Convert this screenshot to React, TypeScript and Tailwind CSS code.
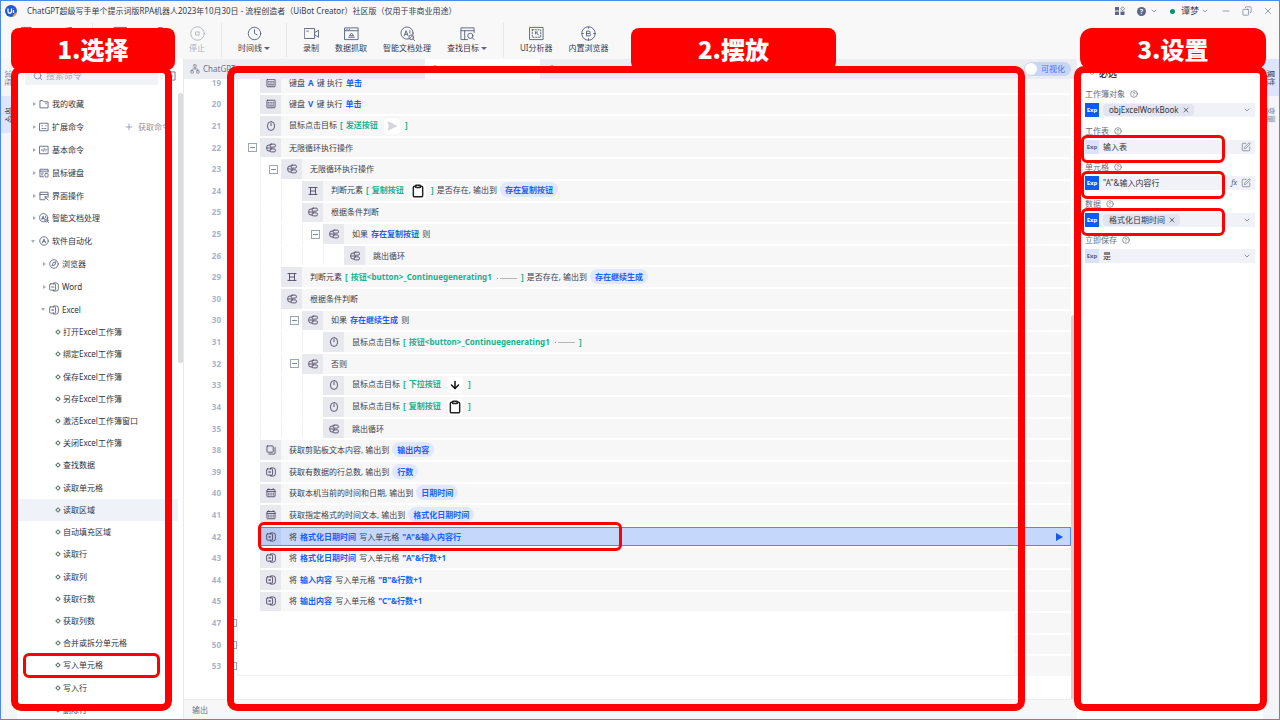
import { useState } from 'react';
import type { ReactNode } from 'react';
import clsx from 'clsx';
import {
  ArrowDown,
  ChevronDown,
  CircleHelp,
  Clipboard,
  Clock,
  Copy as Restore,
  Minus,
  Network,
  Plus,
  Search,
  SendHorizontal,
  SquarePen,
  X,
} from 'lucide-react';

/* ---------- icons ---------- */

interface GlyphProps {
  className?: string;
  children: ReactNode;
}

function Glyph({ className, children }: GlyphProps) {
  return (
    <svg
      viewBox="0 0 16 16"
      className={clsx('shrink-0', className)}
      fill="none"
      stroke="currentColor"
      strokeWidth="1.4"
      strokeLinecap="round"
      strokeLinejoin="round"
      aria-hidden="true"
    >
      {children}
    </svg>
  );
}

const glyphs = {
  keyboard: (
    <>
      <rect x="1.5" y="2" width="13" height="12" rx="1" />
      <path d="M4 5.5h1M7.5 5.5h1M11 5.5h1M4 8h1M7.5 8h1M11 8h1M4 11h8" />
    </>
  ),
  mouse: (
    <>
      <rect x="2.5" y="1" width="11" height="14" rx="5.5" />
      <path d="M8 4v3.5" />
    </>
  ),
  branch: (
    <>
      <rect x="6.5" y="1.8" width="8.5" height="4.8" rx="1.8" />
      <rect x="6.5" y="9.4" width="8.500" height="4.8" rx="1.8" />
      <path d="M6.500 3.200H5A3.500 3.500 0 0 0 1.200 6.700v2.600A3.500 3.500 0 0 0 5 12.800h1.500M1.500 8h7" />
    </>
  ),
  frame: <path d="M4 2.500v11M12 2.500v11M1.500 2.500h13M1.500 13.500h13M4 8h8" />,
  copy: (
    <>
      <rect x="1.5" y="1.5" width="10" height="10" rx="1" />
      <path d="M14.5 4v9a1.5 1.5 0 0 1-1.5 1.5H4.5" />
    </>
  ),
  excel: (
    <>
      <rect x="1" y="3" width="9.500" height="10" rx="1.500" />
      <path d="M7 3V1.500h4.500a3.500 3.500 0 0 1 3.500 3.500v6a3.500 3.500 0 0 1-3.500 3.500H7V13M4.500 6.700l2.600 2.600M7.100 6.700L4.500 9.300" />
    </>
  ),
  word: (
    <>
      <rect x="1" y="3" width="9.500" height="10" rx="1.500" />
      <path d="M7 3V1.500h4.500a3.500 3.500 0 0 1 3.500 3.500v6a3.500 3.500 0 0 1-3.500 3.500H7V13M4 8h4" />
    </>
  ),
  calendar: (
    <>
      <rect x="1.5" y="2.5" width="13" height="11.5" rx="1" />
      <path d="M1.5 5.5h13M4.5 8v3.5M8 8v3.5M11.5 8v3.5M4.5 1v1.5M11.5 1v1.5" />
    </>
  ),
  folder: <path d="M1.5 13.5v-11H6l2 2h6.5v9zM11 7.5h1" />,
  extend: (
    <>
      <rect x="1.5" y="2" width="13" height="12" />
      <path d="M5 5.5v1M11 5.5v1M5 10.5h2M9 10.5h2" />
    </>
  ),
  basic: (
    <>
      <rect x="1.5" y="2" width="13" height="12" />
      <path d="M5.5 6.5L4 8l1.5 1.5M10.5 6.5L12 8l-1.5 1.5M8.5 6l-1 4" />
    </>
  ),
  device: (
    <>
      <path d="M7 14H1.5V2h13v4.5M1.5 5h13M4 8h3M4 11h2" />
      <rect x="9.5" y="8.5" width="5" height="6" rx="1.5" />
    </>
  ),
  screen: <path d="M9 14H1.5V2h13v8M1.5 5.5h13M10 9.5l4.5 5M10 9.5v3M10 9.5h3" />,
  ai: (
    <>
      <circle cx="7.5" cy="7.5" r="6.5" />
      <path d="M4.5 10.5l2-5.5 2 5.5M5.2 8.800h2.600M10.500 5v2.500" />
      <circle cx="12" cy="12" r="2.5" />
      <path d="M14 14l1.5 1.5" />
    </>
  ),
  soft: (
    <>
      <circle cx="8" cy="8" r="6.8" />
      <path d="M5.5 11L8 4.8 10.5 11M6.5 9h3" />
    </>
  ),
  compass: (
    <>
      <circle cx="8" cy="8" r="6.8" />
      <path d="M11 5L9.5 9.5 5 11l1.5-4.5z" />
    </>
  ),
};

const toolGlyphs = {
  save: <path d="M2 1.5h10l2 2v11H2zM5 1.5v4h6v-4M5 14.5V9h6v5.5" />,
  run: <path d="M1.5 3.5L14.5 1.5v13H1.5z" />,
  record: <path d="M1.5 1.5h13v11h-13zM5 15h6" />,
  pause: (
    <>
      <circle cx="8" cy="8" r="6.5" />
      <path d="M6.5 5.5v5M9.5 5.5v5" />
    </>
  ),
  stop: (
    <>
      <circle cx="8" cy="8" r="7.2" />
      <rect x="6.3" y="6.3" width="3.4" height="3.4" />
    </>
  ),
  camera: (
    <>
      <rect x="0.7" y="2.7" width="10.6" height="10.6" />
      <path d="M11.5 7l4-2.5v7.5l-4-2.5M3 5.5h1.5" />
    </>
  ),
  grab: (
    <>
      <rect x="1" y="2" width="14" height="12.5" />
      <path d="M1 5h14M3 3.5h.5M5.5 3.5h.5M5 12h6M6 10l2-2.5 2 2.5z" />
    </>
  ),
  find: (
    <>
      <path d="M8 14.5H1V2h14v5M1 5h14M5 5v9.5" />
      <circle cx="11" cy="10.5" r="2.8" />
      <path d="M13 12.5l2.2 2.2" />
    </>
  ),
  inspect: (
    <>
      <rect x="1" y="1.5" width="14" height="13" />
      <rect x="3.5" y="4" width="9" height="8" strokeDasharray="1.4 1.6" />
      <path d="M7 6.5l3 3M7 6.5v2M7 6.5h2" />
    </>
  ),
  browser: (
    <>
      <circle cx="8" cy="8" r="7.2" />
      <path d="M6.3 5.5h2.2a1.2 1.2 0 0 1 0 2.5H6.3zM6.3 8h2.7a1.2 1.2 0 0 1 0 2.5H6.3zM8 1v1.5M8 13.5V15M1 8h1.5M13.5 8H15" />
    </>
  ),
};

type GlyphName = keyof typeof glyphs;

/* ---------- title bar ---------- */

function TitleBar() {
  return (
    <header className="flex h-5 shrink-0 items-center pl-1 pr-1.5">
      <svg viewBox="0 0 24 24" className="size-3 shrink-0" aria-hidden="true">
        <circle cx="12" cy="12" r="12" fill="#1f57d6" />
        <path d="M6 7v6a3.5 3.5 0 0 0 7 0V7M17 10v6M17 6.5v.5" stroke="#fff" strokeWidth="2.6" fill="none" />
        <path d="M14 24a12 12 0 0 0 10-10l-5 3z" fill="#f2a23a" />
      </svg>
      <h1 className="ml-2.5 whitespace-pre text-[8px] text-[#333a4d]">
        ChatGPT超级写手单个提示词版RPA机器人2023年10月30日 - 流程创造者（UiBot Creator）社区版（仅用于非商业用途）
      </h1>
      <div className="ml-auto flex items-center text-[#5b6685]">
        <button type="button" aria-label="应用" className="mr-3">
          <svg viewBox="0 0 10 10" className="size-2.5" fill="currentColor" aria-hidden="true">
            <path d="M0 1h4v3.5H0zM0 5.5h4V9H0zM5.5 5.5h4V9h-4z" />
            <path d="M7.6.8l2 2-2 2-2-2z" fill="none" stroke="currentColor" strokeWidth=".8" />
          </svg>
        </button>
        <button type="button" aria-label="帮助" className="mr-3 flex items-center gap-1">
          <span className="flex size-[9px] items-center justify-center rounded-full bg-[#5b6685] text-[7px] font-bold leading-none text-white">
            ?
          </span>
          <ChevronDown className="size-2" />
        </button>
        <button type="button" className="mr-3 flex items-center text-[9px] text-[#3b4256]">
          <span className="mr-1.5 size-[5px] rounded-full bg-[#0b8f6f]" />
          谭梦
          <ChevronDown className="ml-0.5 size-2 text-[#5b6685]" />
        </button>
        <button type="button" aria-label="最小化" className="mr-[11px]">
          <Minus className="size-2.5" strokeWidth={1.5} />
        </button>
        <button type="button" aria-label="还原" className="mr-[11px]">
          <Restore className="size-2.5 -scale-x-100" strokeWidth={1.5} />
        </button>
        <button type="button" aria-label="关闭">
          <X className="size-2.5" strokeWidth={1.5} />
        </button>
      </div>
    </header>
  );
}

/* ---------- toolbar ---------- */

interface ToolProps {
  icon: ReactNode;
  label?: string;
  name?: string;
  menu?: boolean;
  muted?: boolean;
  className?: string;
}

function Tool({ icon, label, name, menu, muted, className }: ToolProps) {
  return (
    <button
      type="button"
      aria-label={name}
      className={clsx(
        'flex shrink-0 flex-col items-center gap-px pt-[5px] text-[8px] leading-3',
        muted ? 'text-[#aab0bd]' : 'text-[#343b50]',
        className,
      )}
    >
      <span className={muted ? 'text-[#b4b9c6]' : 'text-[#5a6480]'}>{icon}</span>
      {label && (
        <span className="flex items-center gap-0.5 whitespace-nowrap">
          {label}
          {menu && <span className="border-x-3 border-t-3 border-x-transparent border-t-[#5a6480]" />}
        </span>
      )}
    </button>
  );
}

function Divider() {
  return <span className="my-0.5 w-px shrink-0 bg-[#e6e7eb]" />;
}

function ToolIcon({ children }: { children: ReactNode }) {
  return (
    <Glyph className="size-[15px]">
      <g strokeWidth="1">{children}</g>
    </Glyph>
  );
}

function Toolbar() {
  return (
    <nav className="flex h-[38px] shrink-0 gap-4 pl-[15px]">
      <Tool className="w-[22px]" name="保存" icon={<ToolIcon>{toolGlyphs.save}</ToolIcon>} />
      <Tool className="w-[22px]" name="运行" icon={<ToolIcon>{toolGlyphs.run}</ToolIcon>} />
      <Divider />
      <Tool className="w-[22px]" name="运行全流程" icon={<ToolIcon>{toolGlyphs.record}</ToolIcon>} />
      <Tool className="w-[26px]" name="暂停" icon={<ToolIcon>{toolGlyphs.pause}</ToolIcon>} />
      <Tool muted label="停止" icon={<ToolIcon>{toolGlyphs.stop}</ToolIcon>} />
      <Divider />
      <Tool label="时间线" menu icon={<Clock className="size-[15px]" strokeWidth={1.5} />} />
      <Divider />
      <Tool label="录制" icon={<ToolIcon>{toolGlyphs.camera}</ToolIcon>} />
      <Tool label="数据抓取" icon={<ToolIcon>{toolGlyphs.grab}</ToolIcon>} />
      <Tool label="智能文档处理" icon={<ToolIcon>{glyphs.ai}</ToolIcon>} />
      <Tool label="查找目标" menu icon={<ToolIcon>{toolGlyphs.find}</ToolIcon>} />
      <Divider />
      <Tool label="UI分析器" icon={<ToolIcon>{toolGlyphs.inspect}</ToolIcon>} />
      <Tool label="内置浏览器" icon={<ToolIcon>{toolGlyphs.browser}</ToolIcon>} />
    </nav>
  );
}

/* ---------- command tree ---------- */

interface TreeGroup {
  label: string;
  icon: GlyphName;
  open?: boolean;
  child?: boolean;
  action?: string;
}

const groups: TreeGroup[] = [
  { label: '我的收藏', icon: 'folder' },
  { label: '扩展命令', icon: 'extend', action: '获取命令' },
  { label: '基本命令', icon: 'basic' },
  { label: '鼠标键盘', icon: 'device' },
  { label: '界面操作', icon: 'screen' },
  { label: '智能文档处理', icon: 'ai' },
  { label: '软件自动化', icon: 'soft', open: true },
  { label: '浏览器', icon: 'compass', child: true },
  { label: 'Word', icon: 'word', child: true },
  { label: 'Excel', icon: 'excel', child: true, open: true },
];

const commands = [
  '打开Excel工作簿',
  '绑定Excel工作簿',
  '保存Excel工作簿',
  '另存Excel工作簿',
  '激活Excel工作簿窗口',
  '关闭Excel工作簿',
  '查找数据',
  '读取单元格',
  '读取区域',
  '自动填充区域',
  '读取行',
  '读取列',
  '获取行数',
  '获取列数',
  '合并或拆分单元格',
  '写入单元格',
  '写入行',
  '删除行',
];

function CommandPanel() {
  return (
    <aside className="flex w-[167px] shrink-0 flex-col overflow-hidden border-r border-[#e8e9ed] bg-white">
      <div className="mt-[7px] flex h-[19px] shrink-0 items-center pl-2">
        <label className="flex h-full w-[133px] items-center gap-[3px] bg-[#f2f3f7] pl-2 text-[#7b86a3]">
          <Search className="size-2.5 shrink-0" />
          <input
            type="search"
            aria-label="搜索命令"
            placeholder="搜索命令"
            className="w-full bg-transparent text-[9px] outline-none placeholder:text-[#a5adc0]"
          />
        </label>
        <button type="button" aria-label="折叠" className="ml-2 text-[#6b5f80]">
          <Glyph className="size-2.5">
            <rect x="1.5" y="1.5" width="13" height="13" />
            <path d="M6 8h5" />
          </Glyph>
        </button>
      </div>
      <div className="mt-2 flex min-h-0 flex-1">
        <div className="min-w-0 flex-1 overflow-hidden text-[8px] text-[#2f3442]">
          <ul className="grid h-[228px] auto-rows-fr">
            {groups.map((group) => (
              <li key={group.label} className={clsx('flex items-center', group.child ? 'pl-6' : 'pl-3.5')}>
                <button type="button" className="flex items-center whitespace-nowrap">
                  <span className="flex w-2 shrink-0 justify-start">
                    {group.open ? (
                      <span className="border-x-2 border-t-3 border-x-transparent border-t-[#a3adc2]" />
                    ) : (
                      <span className="ml-0.5 border-y-2 border-l-3 border-y-transparent border-l-[#a3adc2]" />
                    )}
                  </span>
                  <Glyph className="mr-[3px] size-2.5 text-[#5d6580]">{glyphs[group.icon]}</Glyph>
                  {group.label}
                </button>
                {group.action && (
                  <a href="#market" className="ml-10 flex items-center gap-1 whitespace-nowrap text-[#8d96a8]">
                    <Plus className="size-2.5" strokeWidth={2} />
                    {group.action}
                  </a>
                )}
              </li>
            ))}
          </ul>
          <ul className="grid h-[400px] auto-rows-fr">
            {commands.map((command) => (
              <li
                key={command}
                className={clsx('relative flex items-center pl-[39px]', command === '读取区域' && 'bg-[#f0f2fa]')}
              >
                <button type="button" className="flex items-center gap-[3px] whitespace-nowrap">
                  <span className="size-1 rotate-45 border border-[#55705f]" />
                  {command}
                </button>
                {command === '写入单元格' && (
                  <span className="pointer-events-none absolute -inset-y-px left-1.5 w-[137px] rounded-md border-3 border-[#ff0000]" />
                )}
              </li>
            ))}
          </ul>
        </div>
        <div className="w-[5px] shrink-0">
          <div className="h-[270px] rounded-full bg-[#dadbde]" />
        </div>
      </div>
    </aside>
  );
}

/* ---------- flow editor ---------- */

function Val({ children }: { children: ReactNode }) {
  return <b className="mx-px font-bold text-[#1a5ff7]">{children}</b>;
}

function Pill({ children }: { children: ReactNode }) {
  return <b className="ml-px rounded-full bg-[#e0e8fd] px-[5px] py-0.5 font-bold text-[#1a5ff7]">{children}</b>;
}

interface TargetProps {
  name: string;
  thumb?: ReactNode;
}

function Target({ name, thumb }: TargetProps) {
  return (
    <span className="mx-px font-bold text-[#21b08d]">
      [ <span className="mx-px">{name}</span>{' '}
      {thumb ? (
        <span className="mx-[3px] inline-flex size-4 items-center justify-center rounded-sm bg-white align-middle">
          {thumb}
        </span>
      ) : (
        <span className="mx-0.5 inline-flex w-5 items-center gap-0.5 align-middle">
          <span className="size-px bg-[#999999]" />
          <span className="h-px flex-1 bg-[#b5b5b5]" />
        </span>
      )}{' '}
      ]
    </span>
  );
}

interface Step {
  line: number;
  level?: number;
  icon?: GlyphName;
  fold?: boolean;
  selected?: boolean;
  text?: ReactNode;
}

const clipboardThumb = <Clipboard className="size-3.5 text-[#222222]" strokeWidth={2.5} />;

const steps: Step[] = [
  { line: 19, level: 0, icon: 'keyboard', text: <>键盘 <Val>A</Val> 键 执行 <Val>单击</Val></> },
  { line: 20, level: 0, icon: 'keyboard', text: <>键盘 <Val>V</Val> 键 执行 <Val>单击</Val></> },
  {
    line: 21,
    level: 0,
    icon: 'mouse',
    text: (
      <>
        鼠标点击目标{' '}
        <Target
          name="发送按钮"
          thumb={<SendHorizontal className="size-2.5 fill-[#d5d5dd] text-[#d5d5dd]" strokeWidth={3} />}
        />
      </>
    ),
  },
  { line: 22, level: 0, icon: 'branch', fold: true, text: '无限循环执行操作' },
  { line: 23, level: 1, icon: 'branch', fold: true, text: '无限循环执行操作' },
  {
    line: 24,
    level: 2,
    icon: 'frame',
    text: <>判断元素 <Target name="复制按钮" thumb={clipboardThumb} /> 是否存在, 输出到 <Pill>存在复制按钮</Pill></>,
  },
  { line: 25, level: 2, icon: 'branch', text: '根据条件判断' },
  { line: 25, level: 3, icon: 'branch', fold: true, text: <>如果 <Val>存在复制按钮</Val> 则</> },
  { line: 26, level: 4, icon: 'branch', text: '跳出循环' },
  {
    line: 29,
    level: 1,
    icon: 'frame',
    text: <>判断元素 <Target name="按钮<button>_Continuegenerating1" /> 是否存在, 输出到 <Pill>存在继续生成</Pill></>,
  },
  { line: 30, level: 1, icon: 'branch', text: '根据条件判断' },
  { line: 30, level: 2, icon: 'branch', fold: true, text: <>如果 <Val>存在继续生成</Val> 则</> },
  { line: 31, level: 3, icon: 'mouse', text: <>鼠标点击目标 <Target name="按钮<button>_Continuegenerating1" /></> },
  { line: 32, level: 2, icon: 'branch', fold: true, text: '否则' },
  {
    line: 33,
    level: 3,
    icon: 'mouse',
    text: (
      <>
        鼠标点击目标{' '}
        <Target name="下拉按钮" thumb={<ArrowDown className="size-3 text-[#111111]" strokeWidth={3} />} />
      </>
    ),
  },
  { line: 34, level: 3, icon: 'mouse', text: <>鼠标点击目标 <Target name="复制按钮" thumb={clipboardThumb} /></> },
  { line: 35, level: 3, icon: 'branch', text: '跳出循环' },
  { line: 38, level: 0, icon: 'copy', text: <>获取剪贴板文本内容, 输出到 <Pill>输出内容</Pill></> },
  { line: 39, level: 0, icon: 'excel', text: <>获取有数据的行总数, 输出到 <Pill>行数</Pill></> },
  { line: 40, level: 0, icon: 'calendar', text: <>获取本机当前的时间和日期, 输出到 <Pill>日期时间</Pill></> },
  { line: 41, level: 0, icon: 'calendar', text: <>获取指定格式的时间文本, 输出到 <Pill>格式化日期时间</Pill></> },
  {
    line: 42,
    level: 0,
    icon: 'excel',
    selected: true,
    text: <>将 <Val>格式化日期时间</Val> 写入单元格 <Val>"A"&输入内容行</Val></>,
  },
  { line: 43, level: 0, icon: 'excel', text: <>将 <Val>格式化日期时间</Val> 写入单元格 <Val>"A"&行数+1</Val></> },
  { line: 44, level: 0, icon: 'excel', text: <>将 <Val>输入内容</Val> 写入单元格 <Val>"B"&行数+1</Val></> },
  { line: 45, level: 0, icon: 'excel', text: <>将 <Val>输出内容</Val> 写入单元格 <Val>"C"&行数+1</Val></> },
  { line: 47 },
  { line: 50 },
  { line: 53 },
];

function FoldBox() {
  return (
    <button
      type="button"
      aria-label="折叠"
      className="flex size-[9px] shrink-0 items-center justify-center border border-[#9aa5b8] bg-white"
    >
      <span className="h-px w-[5px] bg-[#7d8aa0]" />
    </button>
  );
}

function StepRow({ step }: { step: Step }) {
  const { line, level = 0, icon, fold, selected, text } = step;

  return (
    <li className="flex items-stretch py-px leading-none">
      <span className="flex w-[37px] shrink-0 items-center justify-end font-bold text-[#a9b3cb]">{line}</span>
      {icon ? (
        <>
          <span className="w-4 shrink-0" />
          {Array.from({ length: level + 1 }, (_, i) => (
            <span
              key={i}
              className={clsx(
                'flex shrink-0 items-center justify-end border-l border-[#f0f0f3] pr-[3px]',
                i === 0 ? 'w-[23px]' : 'w-[21px]',
              )}
            >
              {fold && i === level && <FoldBox />}
            </span>
          ))}
          <div
            className={clsx(
              'relative flex min-w-0 flex-1 items-stretch',
              selected ? 'z-10 bg-[#c5d7fb] outline -outline-offset-1 outline-[#4f88f7]' : 'bg-[#f7f7f7]',
            )}
          >
            <span
              className={clsx(
                'flex w-[21px] shrink-0 items-center justify-center text-[#4b4462]',
                selected ? 'bg-[#b9cbf1]' : 'bg-[#e8e8ef]',
              )}
            >
              <Glyph className="size-2.5">{glyphs[icon]}</Glyph>
            </span>
            <span className="flex min-w-0 items-center pl-2">
              <span className="whitespace-pre">{text}</span>
            </span>
            {selected && (
              <>
                <button type="button" aria-label="运行此行" className="ml-auto pr-2">
                  <svg viewBox="0 0 8 8" className="size-2" fill="#1459f5" aria-hidden="true">
                    <path d="M1 0l7 4-7 4z" />
                  </svg>
                </button>
                <span className="pointer-events-none absolute -inset-y-[5px] -left-0.5 w-[364px] rounded-md border-3 border-[#ff0000]" />
              </>
            )}
          </div>
        </>
      ) : (
        <>
          <span className="flex w-4 shrink-0 items-center justify-end">
            <span className="h-2 w-2 border border-[#9aa5b8]" />
          </span>
          <span className={clsx('flex-1 border-l border-[#f0f0f3]', line === 53 && 'border-b')} />
          <span className="w-[57px] bg-[#f7f7f7]" />
        </>
      )}
    </li>
  );
}

function TabBar() {
  const [visual, setVisual] = useState(false);

  return (
    <div className="flex h-5 shrink-0 items-center bg-[#ecedf2] pr-1.5 text-[8px] text-[#6a7285]">
      <button type="button" className="flex w-[241px] shrink-0 items-center gap-[3px] pl-1.5">
        <Network className="size-2.5" strokeWidth={1.5} />
        ChatGPT
      </button>
      <button type="button" aria-label="当前流程块" className="flex h-full w-[115px] shrink-0 items-center bg-white pl-1.5">
        <Glyph className="size-2">{glyphs.soft}</Glyph>
      </button>
      <button type="button" aria-label="流程块" className="pl-2">
        <Glyph className="size-2">{glyphs.soft}</Glyph>
      </button>
      <label className="ml-auto flex h-3.5 items-center gap-1 rounded-full bg-[#c9d5f5] pl-px pr-1.5 text-[#3a74f5]">
        <input
          type="checkbox"
          role="switch"
          className="size-3 appearance-none rounded-full bg-white"
          checked={visual}
          onChange={(e) => setVisual(e.target.checked)}
        />
        可视化
      </label>
    </div>
  );
}

function FlowEditor() {
  return (
    <main className="flex min-w-0 flex-1 flex-col bg-white">
      <TabBar />
      <div className="flex min-h-0 flex-1 overflow-hidden">
        <ol className="-mt-[7px] grid h-[605px] min-w-0 flex-1 auto-rows-fr text-[8px] text-[#3a3f4c]">
          {steps.map((step, i) => (
            <StepRow key={i} step={step} />
          ))}
        </ol>
        <div className="flex w-1.5 shrink-0 flex-col justify-end">
          <div className="h-[62%] rounded-t bg-[#d3d3d6]" />
        </div>
      </div>
      <footer className="flex h-5 shrink-0 items-center border-t border-[#ededf0] bg-[#f7f7f7] pl-2 text-[8px] text-[#6a7285]">
        输出
      </footer>
    </main>
  );
}

/* ---------- property panel ---------- */

interface FieldProps {
  id: string;
  label: string;
  expression?: boolean;
  marked?: boolean;
  tools?: ReactNode;
  children: ReactNode;
}

function Field({ id, label, expression, marked, tools, children }: FieldProps) {
  return (
    <div>
      <div className="flex h-3.5 items-center gap-[5px] text-[#666b78]">
        <label htmlFor={id}>{label}</label>
        <CircleHelp className="size-2" strokeWidth={2} />
      </div>
      <div className="relative mt-0.5 flex h-3.5 items-center bg-[#f1f2f7] pr-1 text-[#5d6580]">
        <button
          type="button"
          className={clsx(
            'h-full w-3.5 shrink-0 text-[6px] font-bold leading-none',
            expression ? 'bg-[#0d5bf5] text-white' : 'bg-[#dbe3f8] text-[#5d6580]',
          )}
        >
          Exp
        </button>
        <div className="flex h-full min-w-0 flex-1 items-center pl-1 text-[#2f3442]">{children}</div>
        {tools}
        {marked && (
          <span className="pointer-events-none absolute -bottom-[9px] -left-1 -top-[5px] w-36 rounded-md border-3 border-[#ff0000]" />
        )}
      </div>
    </div>
  );
}

function Tag({ id, children }: { id: string; children: ReactNode }) {
  return (
    <button
      id={id}
      type="button"
      className="flex h-3 items-center gap-[3px] whitespace-nowrap rounded-sm bg-[#e2e4ef] px-1 pl-1.5"
    >
      {children}
      <X className="size-2" />
    </button>
  );
}

function PropertyPanel() {
  const chevron = <ChevronDown className="size-2 shrink-0" strokeWidth={2} />;
  const edit = <SquarePen className="size-2.5 shrink-0" strokeWidth={1.5} />;

  return (
    <aside className="flex w-[186px] shrink-0 flex-col bg-white pl-2 pr-2 pt-2 text-[8px]">
      <h2 className="flex h-3.5 items-center gap-1 pl-1 text-[9px] font-bold text-[#3a3f4c]">
        <ChevronDown className="size-1.5" />
        必选
      </h2>
      <div className="mt-1.5 grid h-[183px] auto-rows-fr">
        <Field id="workbook" label="工作簿对象" expression tools={chevron}>
          <Tag id="workbook">objExcelWorkBook</Tag>
        </Field>
        <Field id="sheet" label="工作表" marked tools={edit}>
          <input id="sheet" defaultValue="输入表" className="w-full bg-transparent outline-none" />
        </Field>
        <Field
          id="cell"
          label="单元格"
          expression
          marked
          tools={
            <>
              <span className="mr-1 font-serif italic">fx</span>
              {edit}
            </>
          }
        >
          <input id="cell" defaultValue={'"A"&输入内容行'} className="w-full bg-transparent outline-none" />
        </Field>
        <Field id="data" label="数据" expression marked tools={chevron}>
          <Tag id="data">格式化日期时间</Tag>
        </Field>
        <Field id="save" label="立即保存" tools={chevron}>
          <select id="save" className="w-full appearance-none bg-transparent outline-none">
            <option>是</option>
            <option>否</option>
          </select>
        </Field>
      </div>
    </aside>
  );
}

/* ---------- side rails ---------- */

interface RailProps {
  tabs: string[];
  active: string;
}

function Rail({ tabs, active }: RailProps) {
  return (
    <nav className="flex w-4 shrink-0 flex-col bg-[#f5f5f8] text-[8px]">
      {tabs.map((tab) => (
        <button
          key={tab}
          type="button"
          className={clsx(
            'flex h-[37px] w-full items-center justify-center [text-orientation:sideways] [writing-mode:vertical-rl]',
            tab === active ? 'bg-[#dce5fb] text-[#3b4256]' : 'text-[#7a8296]',
          )}
        >
          {tab}
        </button>
      ))}
    </nav>
  );
}

/* ---------- tutorial marks ---------- */

function Marks() {
  return (
    <div className="pointer-events-none absolute -inset-px z-20 font-['Noto_Sans_CJK_SC',sans-serif] text-[24px] font-black leading-none text-white">
      <div className="absolute bottom-[9px] left-[11px] top-[66px] w-[161px] rounded-[10px] border-7 border-[#ff0000]" />
      <div className="absolute left-[11px] top-7 flex h-[42px] w-[164px] items-center justify-center rounded-lg bg-[#ff0000]">
        1.选择
      </div>
      <div className="absolute bottom-[9px] left-[227px] right-[255px] top-[66px] rounded-[10px] border-7 border-[#ff0000]" />
      <div className="absolute left-[631px] top-7 flex h-[42px] w-[205px] items-center justify-center rounded-lg bg-[#ff0000]">
        2.摆放
      </div>
      <div className="absolute bottom-[9px] right-[13px] top-[66px] w-[193px] rounded-[10px] border-7 border-[#ff0000]" />
      <div className="absolute right-3.5 top-7 flex h-[42px] w-[186px] items-center justify-center rounded-xl bg-[#ff0000]">
        3.设置
      </div>
    </div>
  );
}

export default function App() {
  return (
    <div className="relative flex h-screen flex-col overflow-hidden border border-[#4f88ee] bg-[#f8f8f8] font-['Noto_Sans','Noto_Sans_CJK_SC',sans-serif]">
      <TitleBar />
      <Toolbar />
      <div className="flex min-h-0 flex-1">
        <Rail tabs={['流程', '命令']} active="命令" />
        <CommandPanel />
        <FlowEditor />
        <PropertyPanel />
        <Rail tabs={['属性', '变量']} active="属性" />
      </div>
      <Marks />
    </div>
  );
}
